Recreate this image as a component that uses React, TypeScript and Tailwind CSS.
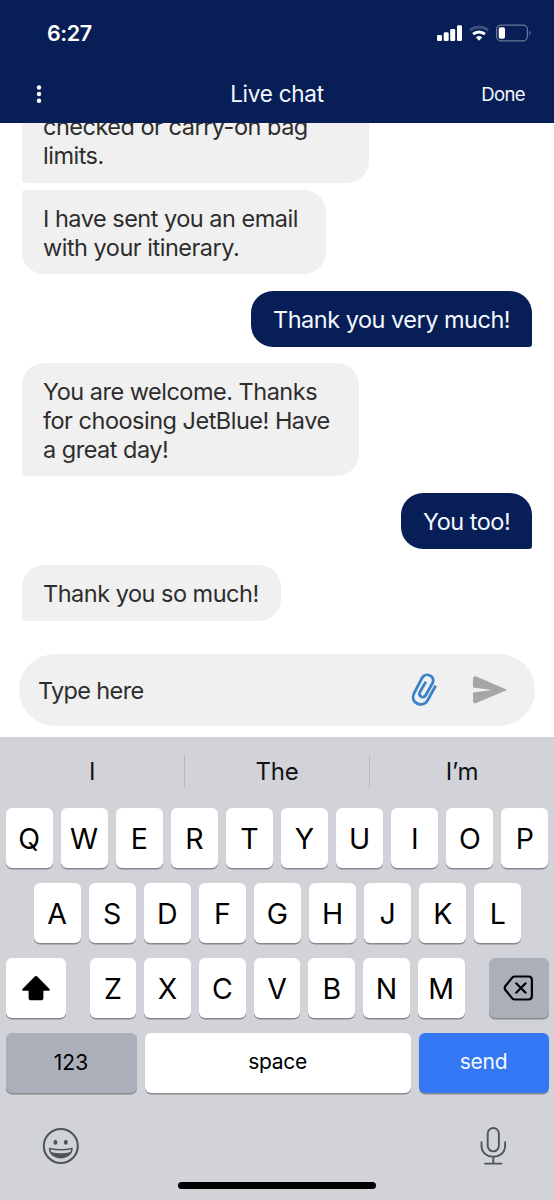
import type { ReactNode } from "react";
import clsx from "clsx";

type Message = {
  from: "agent" | "me";
  lines: string[];
  className: string;
};

const messages: Message[] = [
  {
    from: "agent",
    lines: ["checked or carry-on bag", "limits."],
    className: "w-[347px] h-[84px] rounded-r-[22px] rounded-l-[3px]",
  },
  {
    from: "agent",
    lines: ["I have sent you an email", "with your itinerary."],
    className: "mt-[7px] w-[304px] h-[84px] pt-[2px] rounded-[22px] rounded-tl-[3px]",
  },
  {
    from: "me",
    lines: ["Thank you very much!"],
    className: "mt-[17px] w-[281px] h-[56px] rounded-[22px] rounded-br-[3px]",
  },
  {
    from: "agent",
    lines: ["You are welcome. Thanks", "for choosing JetBlue! Have", "a great day!"],
    className: "mt-[16px] w-[337px] h-[113px] pt-[1px] rounded-[22px] rounded-bl-[3px]",
  },
  {
    from: "me",
    lines: ["You too!"],
    className: "mt-[17px] w-[131px] h-[56px] rounded-[22px] rounded-br-[3px]",
  },
  {
    from: "agent",
    lines: ["Thank you so much!"],
    className: "mt-[16px] w-[259px] h-[56px] rounded-[22px] rounded-bl-[3px]",
  },
];

function Bubble({ message }: { message: Message }) {
  return (
    <div
      className={clsx(
        "flex shrink-0 flex-col justify-center whitespace-nowrap text-[23.5px] leading-[29px] tracking-[-0.5px]",
        message.from === "me"
          ? "self-end bg-[#071e57] pl-[22px] text-[#f4f8ff]"
          : "self-start bg-[#f0f0f0] pl-[21px] text-[#2d2d2e]",
        message.className,
      )}
    >
      {message.lines.map((line) => (
        <span key={line}>{line}</span>
      ))}
    </div>
  );
}

function StatusIcons() {
  return (
    <svg width="96" height="20" viewBox="0 0 96 20" fill="none" className="mt-[2px]">
      <g fill="#fff">
        <rect x="1" y="11" width="5" height="6" rx="1.3" />
        <rect x="7.7" y="8.3" width="5" height="8.7" rx="1.3" />
        <rect x="14.2" y="5" width="5" height="12" rx="1.3" />
        <rect x="21" y="1.2" width="5" height="15.8" rx="1.3" />
      </g>
      <g strokeWidth="3">
        <path d="M33.9 6.4a14 14 0 0 1 18.2 0" stroke="#3b4e7c" />
        <path d="M37.1 10.1a9 9 0 0 1 11.8 0" stroke="#fff" />
      </g>
      <path d="M43 16.7 39.9 13.4a4.5 4.5 0 0 1 6.2 0Z" fill="#fff" />
      <rect x="60.6" y="1.2" width="30.8" height="15.6" rx="4.2" stroke="#6b7899" strokeWidth="1.2" />
      <rect x="62.7" y="3.3" width="6.3" height="11.4" rx="1.8" fill="#fff" />
      <path d="M93.3 6.6c1.6.5 1.6 4.3 0 4.9Z" fill="#6b7899" />
    </svg>
  );
}

function Key({ children, className }: { children: ReactNode; className?: string }) {
  return (
    <div
      className={clsx(
        "flex h-[60px] items-center justify-center rounded-[6px] shadow-[0_1.5px_0_#898a8e]",
        className ?? "min-w-0 flex-1 bg-white pt-[2px] text-[28.5px]",
      )}
    >
      {children}
    </div>
  );
}

function Letters({ row }: { row: string }) {
  return (
    <>
      {row.split("").map((letter) => (
        <Key key={letter}>{letter}</Key>
      ))}
    </>
  );
}

export default function App() {
  return (
    <div className="flex h-[1200px] w-[554px] flex-col overflow-hidden bg-white font-['Inter',sans-serif]">
      <header className="flex h-[123px] shrink-0 flex-col bg-[#071e57] text-white">
        <div className="flex h-[66px] items-center justify-between pl-[47px] pr-[22px]">
          <span className="pt-[1px] text-[21.5px] font-semibold tracking-[-0.4px]">6:27</span>
          <StatusIcons />
        </div>
        <div className="grid h-[56px] grid-cols-3 items-center px-[29px] text-[#f4f8ff]">
          <svg width="8" height="20" viewBox="0 0 8 20" fill="#fff" className="ml-[6px]">
            <circle cx="4" cy="3.5" r="2.2" />
            <circle cx="4" cy="10" r="2.2" />
            <circle cx="4" cy="16.7" r="2.2" />
          </svg>
          <h1 className="whitespace-nowrap text-center text-[22.5px] tracking-[-0.25px]">Live chat</h1>
          <span className="pt-[2px] text-right text-[18.5px] tracking-[-0.6px]">Done</span>
        </div>
      </header>

      {/* pinned to the newest message, so the top bubble slides under the header */}
      <main className="flex h-[531px] shrink-0 flex-col justify-end overflow-hidden px-[22px] pb-[33px]">
        {messages.map((message) => (
          <Bubble key={message.lines[0]} message={message} />
        ))}
      </main>

      <div className="mx-[19px] flex h-[72px] shrink-0 items-center rounded-full bg-[#f0f0f0] pl-[19px] pr-[27px]">
        <span className="flex-1 pt-[2px] text-[23.5px] tracking-[-0.65px] text-[#2d2d2e]">Type here</span>
        <svg width="30" height="38" viewBox="0 0 30 38" fill="none" stroke="#3b82c8" strokeWidth="2.8">
          <path d="M26.7 14.8 18.2 30C14 37 .5 32.5 4.9 22.5L13 7C16.5.5 27 5 23.6 12L16.8 24C14.5 28 9 25.5 10.9 21L17 10.6" />
        </svg>
        <svg width="36" height="30" viewBox="0 0 36 30" fill="#a6a6a6" className="ml-[33px]">
          <path d="M1 3.8Q1 .2 4.3 1.5l29 12.4q2 .9 0 1.9L4.3 28.1Q1 29.4 1 26v-8.5L20 15 1 12.4Z" />
        </svg>
      </div>

      <section className="mt-[11px] flex h-[463px] shrink-0 flex-col bg-[#d1d3d9] text-black">
        <div className="mb-[3px] flex h-[68px] items-center divide-x divide-[#b7b9bf] text-[24px] tracking-[-0.3px] text-[#111214]">
          <span className="flex h-[33px] flex-1 items-center justify-center pt-[2px]">I</span>
          <span className="flex h-[33px] flex-1 items-center justify-center pt-[2px]">The</span>
          <span className="flex h-[33px] flex-1 items-center justify-center pt-[2px]">I’m</span>
        </div>
        <div className="flex flex-col gap-[15px]">
          <div className="flex gap-[8px] px-[5.5px]">
            <Letters row="QWERTYUIOP" />
          </div>
          <div className="flex gap-[8px] pl-[33.5px] pr-[32.5px]">
            <Letters row="ASDFGHJKL" />
          </div>
          <div className="flex gap-[24px] px-[5.5px]">
            <Key className="w-[60px] bg-white">
              <svg width="30" height="26" viewBox="0 0 30 26">
                <path d="M13.7 1.5q1.3-1.2 2.6 0l12 12.2q1.6 2-.8 2h-5.1v7q0 2.6-2.6 2.6h-9.6q-2.6 0-2.6-2.6v-7H2.5q-2.4 0-.8-2Z" />
              </svg>
            </Key>
            <div className="flex flex-1 gap-[8px]">
              <Letters row="ZXCVBNM" />
            </div>
            <Key className="w-[60px] bg-[#abafba]">
              <svg width="31" height="26" viewBox="0 0 31 26" fill="none" stroke="#000" strokeWidth="2.2" strokeLinejoin="round" strokeLinecap="round">
                <path d="M11.8 1.5H25.4q3.5 0 3.5 3.5v16q0 3.5-3.5 3.5H11.8q-1.5 0-2.5-1.1L2.6 15.2q-1.8-2.2 0-4.4L9.3 2.6q1-1.1 2.5-1.1Z" />
                <path d="m13.2 8.3 9.4 9.4m0-9.4-9.4 9.4" />
              </svg>
            </Key>
          </div>
          <div className="flex gap-[8px] px-[5.5px] text-[21px]">
            <Key className="w-[131px] bg-[#abafba]">123</Key>
            <Key className="flex-1 bg-white pb-[2px] tracking-[-0.3px]">space</Key>
            <Key className="w-[130px] bg-[#3478f6] pb-[2px] tracking-[-0.3px] text-[#f4f8ff]">send</Key>
          </div>
        </div>
        <div className="mt-[31px] flex h-[44px] items-center justify-between pl-[42px] pr-[46px]">
          <svg width="38" height="38" viewBox="0 0 38 38" fill="none" stroke="#50545b" strokeWidth="2.1">
            <circle cx="18.8" cy="19" r="17" />
            <ellipse cx="13.4" cy="15.2" rx="1.9" ry="2.5" fill="#50545b" stroke="none" />
            <ellipse cx="23.8" cy="15.2" rx="1.9" ry="2.5" fill="#50545b" stroke="none" />
            <path d="M7.6 21.5q11.2 2.6 22.4 0c-.6 12.2-21.8 12.2-22.4 0Z" strokeWidth="1.6" strokeLinejoin="round" />
            <path d="M8.8 25q10 2.5 20 0c-2.6 7.3-17.4 7.3-20 0Z" fill="#50545b" stroke="none" />
          </svg>
          <svg width="30" height="42" viewBox="0 0 30 42" fill="none" stroke="#50545b" strokeWidth="1.9" strokeLinecap="round">
            <rect x="9.7" y="3" width="11.2" height="23.4" rx="5.6" />
            <path d="M3.5 17.2v3.6c0 14.6 23.6 14.6 23.6 0v-3.6M15.3 31.8v6.8M7 38.6h16.6" />
          </svg>
        </div>
        <div className="mt-[14px] h-[7px] w-[198px] self-center rounded-full bg-black" />
      </section>
    </div>
  );
}
